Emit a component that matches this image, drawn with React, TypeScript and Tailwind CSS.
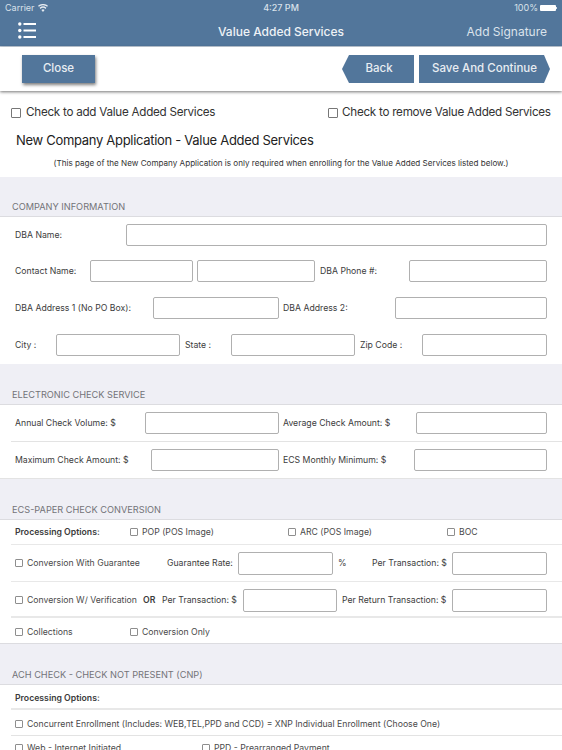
import type { ReactNode } from 'react';

const font = { fontFamily: 'Inter, "Liberation Sans", sans-serif' };

function Input({ className = '' }: { className?: string }) {
    return (
        <div
            className={`h-[22px] shrink-0 rounded-[2px] border border-[#b0b0b0] bg-white ${className}`}
        />
    );
}

function Label({ children, className = '' }: { children: ReactNode; className?: string }) {
    return (
        <span className={`shrink-0 pt-[1px] text-[8.7px] whitespace-nowrap text-[#3c3c3c] ${className}`}>
            {children}
        </span>
    );
}

function Check({ children, className = '' }: { children: ReactNode; className?: string }) {
    return (
        <span className={`flex shrink-0 items-center text-[8.7px] whitespace-nowrap text-[#4a4a4a] ${className}`}>
            <span className="mr-[4px] h-[8px] w-[8px] rounded-[1px] border border-[#8e8e8e] bg-white" />
            <span className="pt-[1px]">{children}</span>
        </span>
    );
}

function SectionHead({ title, className = '' }: { title: string; className?: string }) {
    return (
        <div className={`flex items-end border-b border-[#dcdce0] bg-[#efeff5] pb-[2px] pl-[12px] text-[9.2px] text-[#737378] ${className}`}>
            {title}
        </div>
    );
}

function StatusBar() {
    return (
        <div className="relative flex h-[16px] items-center justify-between pr-[5px] pl-[5px] text-[9px] text-[#d9e1ea]">
            <span className="flex items-center gap-[3px]">
                Carrier
                <svg width="10" height="8" viewBox="0 0 10 8" fill="#e6ebf1">
                    <path d="M5 8 3.4 6a2.4 2.4 0 0 1 3.2 0L5 8ZM2.5 4.9 1.6 3.8a5.2 5.2 0 0 1 6.8 0l-.9 1.1a3.8 3.8 0 0 0-5 0ZM.8 2.8 0 1.8a7.7 7.7 0 0 1 10 0l-.8 1a6.4 6.4 0 0 0-8.4 0Z" />
                </svg>
            </span>
            <span className="absolute left-1/2 -translate-x-1/2 font-medium">4:27 PM</span>
            <span className="flex items-center gap-[2px]">
                100%
                <span className="flex items-center">
                    <span className="h-[6px] w-[16px] rounded-[1px] bg-white" />
                    <span className="h-[2px] w-[1px] bg-[#d9e1ea]" />
                </span>
            </span>
        </div>
    );
}

function NavBar() {
    return (
        <div className="relative flex h-[31px] items-center justify-between border-b border-[#c5d0dc] pr-[15px] pl-[18px]">
            <svg width="18" height="17" viewBox="0 0 18 17" fill="white" className="mb-[1px]">
                <circle cx="1.8" cy="2" r="1.7" />
                <circle cx="1.8" cy="8.5" r="1.7" />
                <circle cx="1.8" cy="15" r="1.7" />
                <rect x="5.5" y="1" width="12.5" height="2" />
                <rect x="5.5" y="7.5" width="12.5" height="2" />
                <rect x="5.5" y="14" width="12.5" height="2" />
            </svg>
            <span className="absolute left-1/2 -translate-x-1/2 pt-[1px] text-[12px] font-medium text-[#eef2f6]">
                Value Added Services
            </span>
            <span className="pt-[1px] text-[12px] text-[#dbe3eb]">Add Signature</span>
        </div>
    );
}

function Toolbar() {
    return (
        <div className="relative z-10 flex h-[44px] items-center bg-white pr-[12px] pl-[22px] shadow-[0_1px_3px_rgba(0,0,0,0.55)]">
            <div className="flex h-[28px] w-[73px] items-center justify-center bg-[#52769b] text-[11.5px] font-medium text-[#e8edf2] shadow-[1px_2px_3px_rgba(0,0,0,0.5)]">
                Close
            </div>
            <div className="ml-auto flex h-[28px] w-[72px] items-center justify-center bg-[#52769b] pl-[2px] text-[11.5px] font-medium text-[#e8edf2] [clip-path:polygon(7px_0,100%_0,100%_100%,7px_100%,0_50%)]">
                Back
            </div>
            <div className="ml-[5px] flex h-[28px] w-[131px] items-center justify-center bg-[#52769b] text-[11.5px] font-medium text-[#e8edf2] [clip-path:polygon(0_0,calc(100%-6px)_0,100%_50%,calc(100%-6px)_100%,0_100%)]">
                Save And Continue
            </div>
        </div>
    );
}

function Heading() {
    return (
        <div className="h-[86px] bg-white">
            <div className="flex h-[39px] items-center pt-[5px] pl-[11px] text-[11.65px] tracking-[-0.25px] whitespace-nowrap text-[#333]">
                <span className="flex w-[204px] shrink-0 items-center">
                    <span className="mr-[5px] h-[10px] w-[10px] shrink-0 rounded-[1px] border border-[#777]" />
                    Check to add Value Added Services
                </span>
                <span className="ml-[113px] flex shrink-0 items-center">
                    <span className="mr-[4px] h-[10px] w-[10px] shrink-0 rounded-[1px] border border-[#777]" />
                    Check to remove Value Added Services
                </span>
            </div>
            <div className="pl-[16px] text-[13px] leading-[20px] tracking-[-0.3px] text-[#222]">
                New Company Application - Value Added Services
            </div>
            <div className="pt-[7px] text-center text-[8.1px] text-[#333]">
                (This page of the New Company Application is only required when enrolling for the Value Added Services listed below.)
            </div>
        </div>
    );
}

function CompanyInformation() {
    return (
        <>
            <SectionHead title="COMPANY INFORMATION" className="h-[40px]" />
            <div className="flex h-[147px] flex-col bg-white pt-[7px] pl-[15px]">
                <div className="flex h-[22px] items-center">
                    <Label className="w-[111px]">DBA Name:</Label>
                    <Input className="w-[421px]" />
                </div>
                <div className="mt-[14px] flex h-[22px] items-center">
                    <Label className="w-[75px]">Contact Name:</Label>
                    <Input className="w-[103px]" />
                    <Input className="ml-[4px] w-[118px]" />
                    <Label className="ml-[5px] w-[89px]">DBA Phone #:</Label>
                    <Input className="w-[138px]" />
                </div>
                <div className="mt-[15px] flex h-[22px] items-center">
                    <Label className="w-[138px]">DBA Address 1 (No PO Box):</Label>
                    <Input className="w-[126px]" />
                    <Label className="ml-[4px] w-[112px]">DBA Address 2:</Label>
                    <Input className="w-[152px]" />
                </div>
                <div className="mt-[15px] flex h-[22px] items-center">
                    <Label className="w-[41px]">City :</Label>
                    <Input className="w-[124px]" />
                    <Label className="ml-[5px] w-[46px]">State :</Label>
                    <Input className="w-[124px]" />
                    <Label className="ml-[5px] w-[62px]">Zip Code :</Label>
                    <Input className="w-[125px]" />
                </div>
            </div>
        </>
    );
}

function ElectronicCheck() {
    return (
        <>
            <SectionHead title="ELECTRONIC CHECK SERVICE" className="h-[41px]" />
            <div className="bg-white">
                <div className="ml-[11px] flex h-[37px] items-center border-b border-[#e3e3e3] pl-[4px]">
                    <Label className="w-[130px]">Annual Check Volume: $</Label>
                    <Input className="w-[134px]" />
                    <Label className="ml-[4px] w-[133px]">Average Check Amount: $</Label>
                    <Input className="w-[131px]" />
                </div>
                <div className="ml-[11px] flex h-[36px] items-center pl-[4px]">
                    <Label className="w-[136px]">Maximum Check Amount: $</Label>
                    <Input className="w-[128px]" />
                    <Label className="ml-[4px] w-[131px]">ECS Monthly Minimum: $</Label>
                    <Input className="w-[133px]" />
                </div>
            </div>
        </>
    );
}

function PaperConversion() {
    return (
        <>
            <SectionHead title="ECS-PAPER CHECK CONVERSION" className="h-[42px] border-t border-t-[#e3e3e3]" />
            <div className="bg-white">
                <div className="ml-[11px] flex h-[25px] items-center border-b border-[#e8e8e8] pl-[4px]">
                    <Label className="w-[115px] font-semibold">Processing Options:</Label>
                    <Check className="w-[158px]">POP (POS Image)</Check>
                    <Check className="w-[159px]">ARC (POS Image)</Check>
                    <Check>BOC</Check>
                </div>
                <div className="ml-[11px] flex h-[37px] items-center border-b border-[#e8e8e8] pl-[4px]">
                    <Check className="w-[152px]">Conversion With Guarantee</Check>
                    <Label className="w-[71px]">Guarantee Rate:</Label>
                    <Input className="h-[23px] w-[95px]" />
                    <Label className="ml-[5px] w-[34px]">%</Label>
                    <Label className="w-[80px]">Per Transaction: $</Label>
                    <Input className="h-[23px] w-[95px]" />
                </div>
                <div className="ml-[11px] flex h-[36px] items-center border-b-2 border-[#e8e8e8] pt-[3px] pl-[4px]">
                    <Check className="w-[128px]">Conversion W/ Verification</Check>
                    <Label className="w-[19px] font-semibold">OR</Label>
                    <Label className="w-[81px]">Per Transaction: $</Label>
                    <Input className="h-[23px] w-[94px]" />
                    <Label className="ml-[5px] w-[110px]">Per Return Transaction: $</Label>
                    <Input className="h-[23px] w-[95px]" />
                </div>
                <div className="flex h-[26px] items-center border-b border-[#dcdce0] pt-[3px] pl-[15px]">
                    <Check className="w-[115px]">Collections</Check>
                    <Check>Conversion Only</Check>
                </div>
            </div>
        </>
    );
}

function AchCheck() {
    return (
        <>
            <SectionHead title="ACH CHECK - CHECK NOT PRESENT (CNP)" className="h-[41px]" />
            <div className="bg-white">
                <div className="ml-[11px] flex h-[25px] items-center border-b-2 border-[#e8e8e8] pt-[3px] pl-[4px]">
                    <Label className="font-semibold">Processing Options:</Label>
                </div>
                <div className="ml-[11px] flex h-[26px] items-center border-b border-[#e3e3e3] pt-[3px] pl-[4px]">
                    <Check>Concurrent Enrollment (Includes: WEB,TEL,PPD and CCD) = XNP Individual Enrollment (Choose One)</Check>
                </div>
                <div className="flex h-[24px] items-center pt-[1px] pl-[15px]">
                    <Check className="w-[187px]">Web - Internet Initiated</Check>
                    <Check>PPD - Prearranged Payment</Check>
                </div>
            </div>
        </>
    );
}

export default function App() {
    return (
        <div className="h-[750px] w-[562px] overflow-hidden bg-[#efeff5]" style={font}>
            <div className="bg-[#52769b]">
                <StatusBar />
                <NavBar />
            </div>
            <Toolbar />
            <Heading />
            <CompanyInformation />
            <ElectronicCheck />
            <PaperConversion />
            <AchCheck />
        </div>
    );
}
